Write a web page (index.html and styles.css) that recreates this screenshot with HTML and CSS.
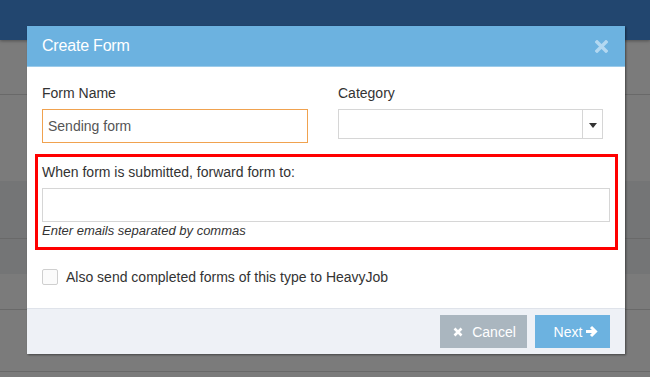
FILE: index.html
```html
<!DOCTYPE html>
<html>
<head>
<meta charset="utf-8">
<link rel="stylesheet" href="styles.css">
</head>
<body>
<div class="page">
  <div class="topbar"></div>
  <div class="bg-row r1"></div>
  <div class="bg-row r2"></div>
  <div class="bg-row r3 dark"></div>
  <div class="bg-row r4 dark"></div>
  <div class="bg-row r5"></div>
  <div class="bg-row r6"></div>
</div>

<div class="modal">
  <div class="modal-header">
    <span class="modal-title">Create Form</span>
    <svg class="close" width="13" height="13" viewBox="0 0 13 13"><path d="M2 2 L11 11 M11 2 L2 11" stroke="#b3d8f1" stroke-width="3.4" stroke-linecap="square"/></svg>
  </div>
  <div class="modal-body">
    <div class="grid">
      <div class="field">
        <label class="lbl">Form Name</label>
        <div class="input active">Sending form</div>
      </div>
      <div class="field">
        <label class="lbl">Category</label>
        <div class="select">
          <div class="select-val"></div>
          <div class="select-btn"><svg width="8" height="5" viewBox="0 0 8 5"><path d="M0 0 H8 L4 5 Z" fill="#333"/></svg></div>
        </div>
      </div>
    </div>
    <div class="forward">
      <label class="lbl">When form is submitted, forward form to:</label>
      <div class="input wide"></div>
      <div class="hint">Enter emails separated by commas</div>
    </div>
    <div class="check-row">
      <span class="checkbox"></span>
      <span class="check-text">Also send completed forms of this type to HeavyJob</span>
    </div>
  </div>
  <div class="modal-footer">
    <button class="btn cancel"><svg width="10" height="10" viewBox="0 0 10 10"><path d="M1.5 1.5 L8.5 8.5 M8.5 1.5 L1.5 8.5" stroke="#fff" stroke-width="2.6"/></svg><span>Cancel</span></button>
    <button class="btn next"><span>Next</span><svg width="13" height="13" viewBox="0 0 13 13"><path d="M1 6.5 H10 M6 2 L10.5 6.5 L6 11" stroke="#fff" stroke-width="3" fill="none" stroke-linejoin="miter"/></svg></button>
  </div>
</div>
</body>
</html>
```
FILE: styles.css
```css
* { box-sizing: border-box; }
html, body { margin: 0; padding: 0; }
body {
  width: 650px;
  height: 377px;
  overflow: hidden;
  background: #7b7b7b;
  font-family: "Liberation Sans", Arial, sans-serif;
  position: relative;
}
.page { display: flex; flex-direction: column; }
.topbar { height: 40px; background: #22466f; box-shadow: 0 1px 3px rgba(0,0,0,0.35); position: relative; z-index: 1; }
.bg-row { background: #7b7b7b; border-bottom: 1px solid #696969; }
.bg-row.dark { background: #747576; }
.r1 { height: 55px; }
.r2 { height: 86px; border-bottom: none; }
.r3 { height: 58px; }
.r4 { height: 35px; border-bottom: none; }
.r5 { height: 36px; }
.r6 { height: 62px; }

.modal {
  position: absolute;
  left: 27px;
  top: 26px;
  width: 598px;
  background: #fff;
  box-shadow: 1px 1px 2px rgba(0,0,0,0.45);
  z-index: 2;
}
.modal-header {
  height: 41px;
  background: #6cb2e0;
  border-bottom: 1px solid #9ccbea;
  display: flex;
  align-items: center;
  justify-content: space-between;
  padding: 0 17px 0 15px;
}
.modal-title { color: #fff; font-size: 16px; letter-spacing: -0.2px; }
.close { display: block; }

.modal-body { padding: 16px 15px 23px 15px; }
.grid { display: grid; grid-template-columns: 266px 265px; column-gap: 30px; }
.lbl { display: block; font-size: 14px; line-height: 20px; color: #333; margin-bottom: 6px; }
.input {
  height: 34px;
  border: 1px solid #d6d6d6;
  font-size: 14px;
  color: #555;
  padding: 0 5px;
  display: flex;
  align-items: center;
}
.input.active { border-color: #f0a24f; }
.select { height: 30px; border: 1px solid #d6d6d6; display: flex; }
.select-val { flex: 1; }
.select-btn { width: 20px; border-left: 1px solid #d6d6d6; display: flex; align-items: center; justify-content: center; padding-top: 2px; }
.select-btn svg { display: block; }

.forward {
  margin: 11px -8px 0 -7px;
  border: 3px solid #ff0000;
  padding: 5px 5px 7px 4px;
}
.input.wide { width: 568px; }
.hint { font-size: 13px; font-style: italic; line-height: 18px; color: #333; }

.check-row { display: flex; align-items: center; margin-top: 19px; }
.checkbox { width: 16px; height: 16px; border: 1px solid #cfcfcf; border-radius: 2px; background: #fbfbfb; margin-right: 8px; }
.check-text { font-size: 14px; color: #333; line-height: 16px; }

.modal-footer {
  border-top: 1px solid #dfe3ea;
  background: #eef1f6;
  height: 46px;
  display: flex;
  justify-content: flex-end;
  align-items: flex-start;
  padding: 6px 15px 0 0;
  gap: 8px;
}
.btn {
  height: 33px;
  border: none;
  color: #fff;
  font-family: "Liberation Sans", Arial, sans-serif;
  font-size: 14px;
  display: flex;
  align-items: center;
  justify-content: center;
  padding: 0;
}
.btn svg { display: block; }
.cancel { width: 87px; background: #aab6bf; gap: 9px; padding-left: 2px; }
.next { width: 75px; background: #6cb2e0; gap: 3px; padding-left: 7px; }
```
